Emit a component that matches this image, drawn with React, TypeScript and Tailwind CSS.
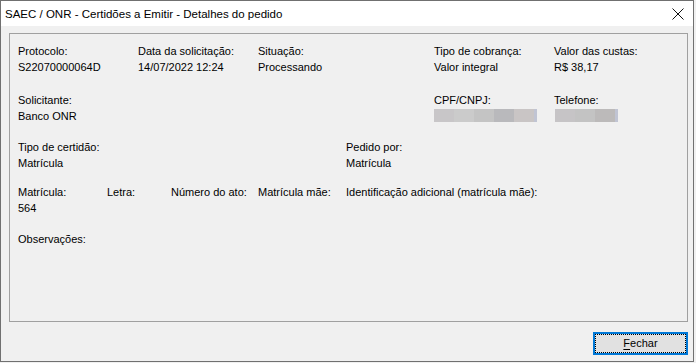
import React from "react";

const blur1 = ["#c8c6c8", "#cbcbcb", "#c4c4c4", "#b9b9bc", "#c9c5c5"];
const blur2 = ["#c6c4c6", "#c3c3c3", "#bcbaba"];

function Blur({ colors }: { colors: string[] }) {
  return (
    <div className="flex h-[13px]">
      {colors.map((c, i) => (
        <div key={i} className="h-full w-[20px]" style={{ backgroundColor: c }} />
      ))}
      <div className="h-full w-[3px] bg-[#c0c4d3]" />
    </div>
  );
}

function Field({ label, value, children }: { label: string; value?: string; children?: React.ReactNode }) {
  return (
    <div className="flex flex-col whitespace-nowrap">
      <div className="h-[16px] leading-[16px]">{label}</div>
      {value !== undefined && <div className="h-[16px] leading-[16px]">{value}</div>}
      {children}
    </div>
  );
}

export default function App() {
  return (
    <div
      className="w-[696px] h-[363px] bg-[#f0f0f0] text-[11px] text-black"
      style={{ fontFamily: '"Liberation Sans", Arial, sans-serif' }}
    >
      <div className="flex h-[362px] w-[694px] flex-col border border-[#707070] bg-[#f0f0f0]">
        <div className="flex h-[25px] items-center justify-between bg-white pl-[4px] pr-[8px]">
          <span className="text-[11.5px] leading-[16px]">SAEC / ONR - Certidões a Emitir - Detalhes do pedido</span>
          <svg width="12" height="12" viewBox="0 0 12 12" className="mr-[1px]">
            <path d="M0.5 0.5 L11.5 11.5 M11.5 0.5 L0.5 11.5" stroke="#111" strokeWidth="1" />
          </svg>
        </div>
        <div className="flex flex-1 flex-col pl-[8px] pr-[5px] pt-[7px]">
          <div className="flex h-[289px] flex-col border border-[#a0a0a0] pl-[8px] pt-[9px]">
            <div className="grid grid-cols-[120px_120px_176px_120px_1fr]">
              <Field label="Protocolo:" value="S22070000064D" />
              <Field label="Data da solicitação:" value="14/07/2022 12:24" />
              <Field label="Situação:" value="Processando" />
              <Field label="Tipo de cobrança:" value="Valor integral" />
              <Field label="Valor das custas:" value="R$ 38,17" />
            </div>
            <div className="mt-[17px] grid grid-cols-[416px_120px_1fr]">
              <Field label="Solicitante:" value="Banco ONR" />
              <Field label="CPF/CNPJ:">
                <div className="mt-[1px] pl-[0px]">
                  <Blur colors={blur1} />
                </div>
              </Field>
              <Field label="Telefone:">
                <div className="mt-[1px] pl-[1px]">
                  <Blur colors={blur2} />
                </div>
              </Field>
            </div>
            <div className="mt-[15px] grid grid-cols-[328px_1fr]">
              <Field label="Tipo de certidão:" value="Matrícula" />
              <Field label="Pedido por:" value="Matrícula" />
            </div>
            <div className="mt-[13px] grid grid-cols-[89px_64px_87px_88px_1fr]">
              <Field label="Matrícula:" value="564" />
              <Field label="Letra:" />
              <Field label="Número do ato:" />
              <Field label="Matrícula mãe:" />
              <Field label="Identificação adicional (matrícula mãe):" />
            </div>
            <div className="mt-[15px]">
              <Field label="Observações:" />
            </div>
          </div>
          <div className="mt-[10px] flex justify-end">
            <button className="flex h-[23px] w-[95px] items-center justify-center border-2 border-[#0078d7] bg-[#e1e1e1] p-0">
              <span className="flex h-[19px] w-[91px] items-center justify-center border border-dotted border-[#000] text-[11px]">
                <span className="underline decoration-1 underline-offset-2">F</span>echar
              </span>
            </button>
          </div>
        </div>
      </div>
    </div>
  );
}
